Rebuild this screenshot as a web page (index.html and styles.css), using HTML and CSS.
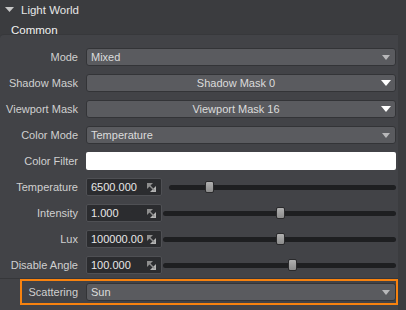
FILE: index.html
```html
<!DOCTYPE html>
<html>
<head>
<meta charset="utf-8">
<link rel="stylesheet" href="styles.css">
</head>
<body>
<div class="header">
  <svg class="caret" width="9" height="5" viewBox="0 0 9 5"><polygon points="0,0 9,0 4.5,5" fill="#c8c8c8"/></svg>
  <span>Light World</span>
</div>
<div class="group-title">Common</div>
<div class="panel">
  <div class="row">
    <label class="lbl">Mode</label>
    <div class="dd"><span>Mixed</span><svg class="arr dim" width="8" height="5" viewBox="0 0 8 5"><polygon points="0,0 8,0 4,5"/></svg></div>
  </div>
  <div class="row">
    <label class="lbl">Shadow Mask</label>
    <div class="dd center"><span>Shadow Mask 0</span><svg class="arr" width="10" height="6" viewBox="0 0 10 6"><polygon points="0,0 10,0 5,6"/></svg></div>
  </div>
  <div class="row">
    <label class="lbl">Viewport Mask</label>
    <div class="dd center"><span>Viewport Mask 16</span><svg class="arr" width="10" height="6" viewBox="0 0 10 6"><polygon points="0,0 10,0 5,6"/></svg></div>
  </div>
  <div class="row">
    <label class="lbl">Color Mode</label>
    <div class="dd"><span>Temperature</span><svg class="arr dim" width="8" height="5" viewBox="0 0 8 5"><polygon points="0,0 8,0 4,5"/></svg></div>
  </div>
  <div class="row">
    <label class="lbl">Color Filter</label>
    <div class="swatch"></div>
  </div>
  <div class="row">
    <label class="lbl">Temperature</label>
    <div class="slider-ctl first">
      <div class="num"><span>6500.000</span><svg class="grip" width="9" height="9" viewBox="0 0 9 9"><polygon points="0,0 6,0 0,6" fill="#8e8e8e"/><polygon points="9,9 3,9 9,3" fill="#b4b4b4"/><polygon points="2,1 8,7 7,8 1,2" fill="#8e8e8e"/></svg></div>
      <div class="track"><div class="thumb" style="left:36px"></div></div>
    </div>
  </div>
  <div class="row">
    <label class="lbl">Intensity</label>
    <div class="slider-ctl">
      <div class="num"><span>1.000</span><svg class="grip" width="9" height="9" viewBox="0 0 9 9"><polygon points="0,0 6,0 0,6" fill="#8e8e8e"/><polygon points="9,9 3,9 9,3" fill="#b4b4b4"/><polygon points="2,1 8,7 7,8 1,2" fill="#8e8e8e"/></svg></div>
      <div class="track"><div class="thumb" style="left:113px"></div></div>
    </div>
  </div>
  <div class="row">
    <label class="lbl">Lux</label>
    <div class="slider-ctl">
      <div class="num"><span>100000.00</span><svg class="grip" width="9" height="9" viewBox="0 0 9 9"><polygon points="0,0 6,0 0,6" fill="#8e8e8e"/><polygon points="9,9 3,9 9,3" fill="#b4b4b4"/><polygon points="2,1 8,7 7,8 1,2" fill="#8e8e8e"/></svg></div>
      <div class="track"><div class="thumb" style="left:113px"></div></div>
    </div>
  </div>
  <div class="row">
    <label class="lbl">Disable Angle</label>
    <div class="slider-ctl">
      <div class="num"><span>100.000</span><svg class="grip" width="9" height="9" viewBox="0 0 9 9"><polygon points="0,0 6,0 0,6" fill="#8e8e8e"/><polygon points="9,9 3,9 9,3" fill="#b4b4b4"/><polygon points="2,1 8,7 7,8 1,2" fill="#8e8e8e"/></svg></div>
      <div class="track"><div class="thumb" style="left:125px"></div></div>
    </div>
  </div>
  <div class="sep"></div>
  <div class="highlight">
    <div class="row inner">
      <label class="lbl">Scattering</label>
      <div class="dd"><span>Sun</span><svg class="arr dim" width="8" height="5" viewBox="0 0 8 5"><polygon points="0,0 8,0 4,5"/></svg></div>
    </div>
  </div>
</div>
</body>
</html>
```
FILE: styles.css
```css
html, body {
  margin: 0;
  padding: 0;
}
body {
  width: 406px;
  height: 310px;
  overflow: hidden;
  background: #3b3c3f;
  font-family: "Liberation Sans", Arial, sans-serif;
  font-size: 11px;
  color: #d2d2d2;
}
.header {
  height: 19px;
  display: flex;
  align-items: center;
  gap: 7px;
  padding-left: 5px;
  color: #e6e6e6;
  font-size: 11.5px;
}
.caret {
  display: block;
}
.group-title {
  height: 10px;
  line-height: 13px;
  padding: 5px 0 0 11px;
  color: #f2f2f2;
  font-size: 11.5px;
}
.panel {
  margin-right: 8px;
  background: #424347;
  border-top: 1px solid #37383b;
  border-radius: 4px 0 0 0;
  padding: 13px 0 8px 0;
  display: flex;
  flex-direction: column;
  gap: 8px;
}
.row {
  display: grid;
  grid-template-columns: 78px 1fr;
  column-gap: 8px;
  height: 18px;
  align-items: center;
  margin-right: 2px;
}
.lbl {
  text-align: right;
  white-space: nowrap;
  color: #d0d0d0;
}
.dd {
  height: 18px;
  box-sizing: border-box;
  background: #5a5b5f;
  border: 1px solid #333437;
  border-radius: 3px;
  display: flex;
  align-items: center;
  padding: 0 4px 0 4px;
  position: relative;
  color: #dcdcdc;
}
.dd span {
  flex: 1;
}
.dd.center span {
  text-align: center;
}
.arr {
  fill: #ffffff;
  margin-right: 0;
  flex: none;
}
.arr.dim {
  fill: #b8b8ba;
  margin-right: 1px;
}
.swatch {
  height: 18px;
  background: #ffffff;
  border-radius: 2px;
}
.slider-ctl {
  display: flex;
  align-items: center;
  gap: 1px;
}
.slider-ctl.first {
  gap: 7px;
}
.num {
  width: 76px;
  height: 18px;
  box-sizing: border-box;
  background: #2b2c2f;
  border: 1px solid #4f5054;
  border-radius: 2px;
  display: flex;
  align-items: center;
  padding: 0 5px 0 4px;
  color: #e8e8e8;
  flex: none;
}
.num span {
  flex: 1;
}
.grip {
  display: block;
}
.track {
  flex: 1;
  height: 5px;
  background: #1e1f21;
  border-radius: 3px;
  position: relative;
}
.thumb {
  position: absolute;
  top: -4px;
  width: 9px;
  height: 12px;
  box-sizing: border-box;
  background: linear-gradient(#b0b0b0, #8c8c8c);
  border: 1px solid #2a2a2c;
  border-radius: 2px;
}
.sep {
  height: 1px;
  background: #36373a;
  margin: -4px 0 -8px 0;
}
.highlight {
  margin-left: 20px;
  border: 2px solid #f7820f;
  padding: 2px 0;
}
.highlight .row.inner {
  grid-template-columns: 56px 1fr;
  margin-right: 0;
}
```
